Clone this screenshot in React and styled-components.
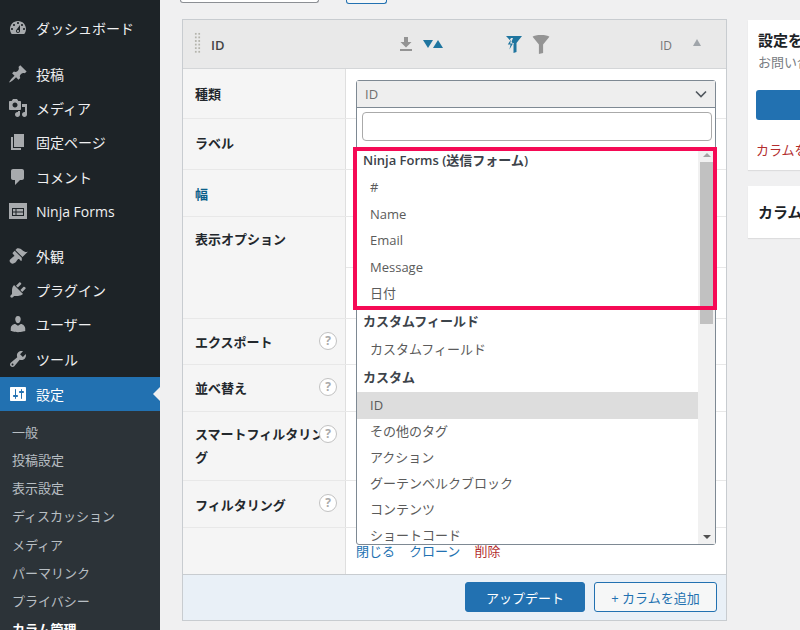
import React from "react";
import styled, { createGlobalStyle } from "styled-components";

const FONT = `"Open Sans", "Noto Sans CJK JP", sans-serif`;

const Global = createGlobalStyle`
  html, body { margin: 0; padding: 0; background: #f0f0f1; }
  * { box-sizing: border-box; }
  body { font-family: ${FONT}; font-size: 13px; color: #3c434a; }
`;

const Shell = styled.div`
  display: flex;
  width: 800px;
  height: 630px;
  overflow: hidden;
  background: #f0f0f1;
`;

/* ---------- admin sidebar ---------- */
const Sidebar = styled.nav`
  flex: 0 0 160px;
  height: 630px;
  overflow: hidden;
  background: #1d2327;
  padding-top: 11px;
`;
const MenuGroup = styled.div`
  margin-bottom: ${(p) => p.$gap}px;
`;
const MenuItem = styled.div`
  position: relative;
  display: flex;
  align-items: center;
  height: ${(p) => (p.$active ? "34px" : "34.4px")};
  padding-left: 8px;
  gap: 8px;
  font-size: 14px;
  color: ${(p) => (p.$active ? "#fff" : "#f0f0f1")};
  background: ${(p) => (p.$active ? "#2271b1" : "transparent")};
  white-space: nowrap;
  svg { flex: 0 0 20px; fill: ${(p) => (p.$active ? "#fff" : "#a7aaad")}; }
`;
const ActiveArrow = styled.span`
  position: absolute;
  right: 0;
  top: 10px;
  border: 7px solid transparent;
  border-right-color: #f0f0f1;
  border-left-width: 0;
`;
const SubMenu = styled.div`
  background: #2c3338;
  padding: 6px 0 6px;
`;
const SubItem = styled.div`
  display: flex;
  align-items: center;
  height: 28.25px;
  padding-left: 12px;
  font-size: 13px;
  white-space: nowrap;
  color: ${(p) => (p.$current ? "#fff" : "rgba(240,246,252,.72)")};
  font-weight: ${(p) => (p.$current ? 700 : 400)};
`;

/* ---------- main ---------- */
const Main = styled.main`
  flex: 1;
  min-width: 0;
  display: flex;
  gap: 21px;
  padding-left: 20px;
`;
const EditorColumn = styled.div`
  flex: 0 0 547px;
`;
const TopStub = styled.div`
  height: 19px;
  display: flex;
  gap: 27px;
  align-items: flex-start;
`;
const StubInput = styled.div`
  width: 139px;
  height: 3px;
  background: #fff;
  border: 1px solid #8c8f94;
  border-top: 0;
  border-radius: 0 0 3px 3px;
`;
const StubButton = styled.div`
  width: 41px;
  height: 4px;
  background: #f6f7f7;
  border: 1px solid #2271b1;
  border-top: 0;
  border-radius: 0 0 3px 3px;
`;
const Card = styled.section`
  margin-left: 2px;
  width: 545px;
  border: 1px solid #c8ccd0;
  background: #fff;
`;
const CardHead = styled.header`
  display: flex;
  align-items: center;
  height: 49px;
  background: #e9e9e9;
  border-bottom: 1px solid #d4d6d8;
  padding-left: 11px;
`;
const DragHandle = styled.span`
  width: 7px;
  height: 22px;
  margin-top: -3px;
  background-image: radial-gradient(circle, #b4b4ac 1.1px, transparent 1.3px);
  background-size: 3.5px 3.6px;
`;
const HeadTitle = styled.strong`
  margin: 2px 0 0 10px;
  width: 188px;
  font-size: 13px;
  font-weight: 600;
  color: #444;
`;
const IconSlot = styled.span`
  display: flex;
  align-items: center;
  width: ${(p) => p.$w}px;
  gap: ${(p) => p.$gap || 0}px;
`;
const HeadType = styled.span`
  width: 33px;
  margin-top: 2px;
  color: #777;
  font-size: 12px;
`;
const Caret = styled.span`
  width: 0;
  height: 0;
  margin-top: -3px;
  border: 4.5px solid transparent;
  border-top: 0;
  border-bottom: 7px solid #a0a5aa;
`;
const CardBody = styled.div`
  position: relative;
`;
const Row = styled.div`
  display: grid;
  grid-template-columns: 163px 1fr;
  height: ${(p) => p.$h}px;
  border-bottom: ${(p) => (p.$last ? "0" : "1px solid #e8e8e8")};
`;
const RowLabel = styled.div`
  position: relative;
  background: #f5f5f5;
  border-right: 1px solid #dfdfdf;
  padding: ${(p) => p.$top}px 10px 0 12px;
  font-size: 13px;
  font-weight: 600;
  line-height: ${(p) => p.$lh || 25}px;
  color: ${(p) => (p.$link ? "#0b5f8a" : "#23282d")};
`;
const RowValue = styled.div`
  padding: 0 10px;
`;
const SubLine = styled.div`
  height: 51px;
  border-bottom: 1px solid #e8e8e8;
  margin: 0 -10px;
`;
const Help = styled.span`
  position: absolute;
  top: 13px;
  right: 8px;
  width: 18px;
  height: 18px;
  border: 1.5px solid #c2c2c2;
  border-radius: 50%;
  background: #fff;
  color: #aaa;
  font-size: 12px;
  font-weight: 700;
  line-height: 15px;
  text-align: center;
`;
const Links = styled.div`
  display: flex;
  gap: 14px;
  padding-top: 14px;
  line-height: 18px;
  color: #2271b1;
`;
const Danger = styled.span`
  color: #b32d2e;
`;
const CardFoot = styled.footer`
  display: flex;
  justify-content: flex-end;
  gap: 9px;
  height: 46px;
  padding: 7px 9px 0 0;
  background: #e9f0f7;
  border-top: 1px solid #c8ccd0;
`;
const Primary = styled.button`
  width: 120px;
  height: 30px;
  border: 1px solid #2271b1;
  border-radius: 3px;
  background: #2271b1;
  color: #fff;
  font: 13px ${FONT};
`;
const Secondary = styled.button`
  width: 123px;
  height: 30px;
  border: 1px solid #2271b1;
  border-radius: 3px;
  background: #f6f7f7;
  color: #2271b1;
  font: 13px ${FONT};
`;

/* ---------- open select (floats over the rows) ---------- */
const Dropdown = styled.div`
  position: absolute;
  left: 173px;
  top: 11px;
  width: 360px;
  height: 465px;
  background: #fff;
  border: 1px solid #7e8993;
  border-radius: 3px;
`;
const SelectHead = styled.div`
  display: flex;
  align-items: center;
  justify-content: space-between;
  height: 27px;
  padding: 0 8px;
  background: #eee;
  border-bottom: 1px solid #7e8993;
  color: #6f6f6f;
  font-size: 13px;
`;
const Search = styled.div`
  height: 29px;
  margin: 4px 3px 7px 5px;
  border: 1px solid #aaa;
  border-radius: 4px;
  background: #fff;
`;
const ListWrap = styled.div`
  display: flex;
  height: 396px;
  overflow: hidden;
`;
const List = styled.ul`
  flex: 1;
  margin: 0;
  padding: 0;
  list-style: none;
  overflow: hidden;
`;
const Group = styled.li`
  height: ${(p) => p.$h}px;
  margin-top: ${(p) => p.$mt || 0}px;
  padding-left: 6px;
  font-weight: 600;
  font-size: 13px;
  line-height: 24px;
  color: #3c434a;
`;
const Option = styled.li`
  height: ${(p) => p.$h || 26}px;
  padding-left: 13px;
  font-size: 13px;
  line-height: ${(p) => p.$h || 25}px;
  color: #5b5b5b;
  background: ${(p) => (p.$selected ? "#ddd" : "transparent")};
`;
const Scrollbar = styled.div`
  flex: 0 0 17px;
  display: flex;
  flex-direction: column;
  background: #f1f1f1;
`;
const ScrollBtn = styled.div`
  height: 14px;
  display: flex;
  align-items: center;
  justify-content: center;
  flex: 0 0 14px;
  margin-top: ${(p) => (p.$push ? "auto" : "0")};
  &::after {
    content: "";
    border: 4px solid transparent;
    ${(p) =>
      p.$down
        ? "border-top: 4px solid #505050; border-bottom: 0;"
        : "border-bottom: 4px solid #a3a3a3; border-top: 0;"}
  }
`;
const ScrollThumb = styled.div`
  height: 162px;
  background: #c1c1c1;
  margin: 0 2px;
`;
const Highlight = styled.div`
  position: absolute;
  left: -4px;
  top: 66px;
  width: 364px;
  height: 163px;
  border: 4px solid #f50a55;
  pointer-events: none;
`;

/* ---------- right column ---------- */
const SideColumn = styled.aside`
  flex: 0 0 auto;
  width: 260px;
  padding-top: 20px;
  display: flex;
  flex-direction: column;
  gap: 16px;
`;
const SideCard = styled.div`
  background: #fff;
  box-shadow: 0 1px 1px rgba(0, 0, 0, 0.08);
  height: ${(p) => p.$h}px;
  padding: ${(p) => p.$pad}px 8px 0 10px;
  white-space: nowrap;
`;
const SideTitle = styled.div`
  font-size: 15px;
  font-weight: 700;
  line-height: 20px;
  color: #1d2327;
`;
const SideNote = styled.div`
  margin-top: 3px;
  font-size: 13px;
  line-height: 18px;
  color: #787c82;
`;
const SideButton = styled.div`
  width: 240px;
  height: 30px;
  margin: 19px 0 0 -2px;
  background: #2271b1;
  border-radius: 3px;
`;
const SideWarn = styled.div`
  margin: 20px 0 0 -2px;
  color: #b32d2e;
  font-size: 13px;
`;

/* ---------- icons ---------- */
const Dash = ({ d }) => (
  <svg width="20" height="20" viewBox="0 0 20 20" aria-hidden="true">
    <path d={d} fillRule="evenodd" />
  </svg>
);
const I = {
  dashboard:
    "M3.76 16h12.48c1.1-1.37 1.76-3.11 1.76-5 0-4.42-3.58-8-8-8s-8 3.58-8 8c0 1.89.66 3.63 1.76 5zM10 4c.55 0 1 .45 1 1s-.45 1-1 1-1-.45-1-1 .45-1 1-1zM6 6c.55 0 1 .45 1 1s-.45 1-1 1-1-.45-1-1 .45-1 1-1zm8 0c.55 0 1 .45 1 1s-.45 1-1 1-1-.45-1-1 .45-1 1-1zm-5.37 5.55L12 7v6c0 1.1-.9 2-2 2s-2-.9-2-2c0-.57.24-1.08.63-1.45zM4 10c.55 0 1 .45 1 1s-.45 1-1 1-1-.45-1-1 .45-1 1-1zm12 0c.55 0 1 .45 1 1s-.45 1-1 1-1-.45-1-1 .45-1 1-1zm-5 3c0-.55-.45-1-1-1s-1 .45-1 1 .45 1 1 1 1-.45 1-1z",
  post:
    "M10.44 3.02l1.82-1.82 6.36 6.35-1.83 1.82c-1.05-.68-2.48-.57-3.41.36l-.75.75c-.92.93-1.04 2.35-.35 3.41l-1.83 1.82-2.41-2.41-2.8 2.79c-.42.42-3.38 2.71-3.8 2.29s1.86-3.39 2.28-3.81l2.79-2.79L4.1 9.36l1.83-1.82c1.05.69 2.48.57 3.4-.36l.75-.75c.93-.92 1.05-2.35.36-3.41z",
  media:
    "M13 11V4c0-.55-.45-1-1-1h-1.67L9 1H5L3.67 3H2c-.55 0-1 .45-1 1v7c0 .55.45 1 1 1h10c.55 0 1-.45 1-1zM7 4.5c1.38 0 2.5 1.12 2.5 2.5S8.38 9.5 7 9.5 4.5 8.38 4.5 7 5.62 4.5 7 4.5zM14 6h5v10.5c0 1.38-1.12 2.5-2.5 2.5S14 17.88 14 16.5s1.12-2.5 2.5-2.5c.17 0 .34.02.5.05V9h-3V6zm-4 8.05V13h2v3.5c0 1.38-1.12 2.5-2.5 2.5S7 17.88 7 16.5 8.12 14 9.5 14c.17 0 .34.02.5.05z",
  page: "M6 15V2h10v13H6zm-1 1h8v2H3V5h2v11z",
  comment:
    "M5 2h9c1.1 0 2 .9 2 2v7c0 1.1-.9 2-2 2h-2l-5 5v-5H5c-1.1 0-2-.9-2-2V4c0-1.1.9-2 2-2z",
  form:
    "M1 2h18v16H1V2zm3 5v8h12V7H4zm1 1h2.5v2.5H5V8zm3.5 0H15v2.5H8.5V8zM5 11.5h2.5V14H5v-2.5zm3.5 0H15V14H8.5v-2.5z",
  appearance:
    "M14.48 11.06L7.41 3.99l1.5-1.5c.5-.56 2.3-.47 3.51.32 1.21.8 1.43 1.28 2.91 2.1 1.18.64 2.45 1.26 4.45.85zm-.71.71L6.7 4.7 4.93 6.47c-.39.39-.39 1.02 0 1.41l1.06 1.06c.39.39.39 1.03 0 1.42-.6.6-1.43 1.11-2.21 1.69-.35.26-.7.53-1.01.84C1.43 13.73.99 15.12 2.6 16.7c1.58 1.61 2.97 1.17 4.81-.14.31-.31.58-.66.84-1.01.58-.78 1.09-1.61 1.69-2.21.39-.39 1.03-.39 1.42 0l1.06 1.06c.39.39 1.02.39 1.41 0z",
  plugin:
    "M13.11 4.36L9.87 7.6 8 5.73l3.24-3.24c.35-.34 1.05-.2 1.56.32.52.51.66 1.21.31 1.55zm-8 1.77l.91-1.12 9.01 9.01-1.19.84c-.71.71-2.63 1.16-3.82 1.16H6.14L4.9 17.26c-.59.59-1.54.59-2.12 0-.59-.58-.59-1.53 0-2.12l1.24-1.24v-3.88c0-1.13.4-3.19 1.09-3.89zm7.26 3.97l3.24-3.24c.34-.35 1.04-.21 1.55.31.52.51.66 1.21.31 1.55l-3.24 3.25z",
  users:
    "M10 9.25c-2.27 0-2.73-3.44-2.73-3.44C7 4.02 7.82 2 9.97 2c2.16 0 2.98 2.02 2.71 3.81 0 0-.41 3.44-2.68 3.44zm0 2.57L12.72 10c2.39 0 4.52 2.33 4.52 4.53v2.49s-3.65 1.13-7.24 1.13c-3.65 0-7.24-1.13-7.24-1.13v-2.49c0-2.25 1.94-4.48 4.47-4.48z",
  tools:
    "M16.68 9.77c-1.34 1.34-3.3 1.67-4.95.99l-5.41 6.52c-.99.99-2.59.99-3.58 0s-.99-2.59 0-3.57l6.52-5.42c-.68-1.65-.35-3.61.99-4.95 1.28-1.28 3.12-1.62 4.72-1.06l-2.89 2.89 2.82 2.82 2.86-2.87c.53 1.58.18 3.39-1.08 4.65zM3.81 16.21c.4.39 1.04.39 1.43 0 .4-.4.4-1.04 0-1.43-.39-.4-1.03-.4-1.43 0-.39.39-.39 1.03 0 1.43z",
  settings:
    "M18 16V4c0-.55-.45-1-1-1H3c-.55 0-1 .45-1 1v12c0 .55.45 1 1 1h14c.55 0 1-.45 1-1zM8 11h1c.55 0 1 .45 1 1s-.45 1-1 1H8v1.5c0 .28-.22.5-.5.5s-.5-.22-.5-.5V13H6c-.55 0-1-.45-1-1s.45-1 1-1h1V5.5c0-.28.22-.5.5-.5s.5.22.5.5V11zm5-2h-1c-.55 0-1-.45-1-1s.45-1 1-1h1V5.5c0-.28.22-.5.5-.5s.5.22.5.5V7h1c.55 0 1 .45 1 1s-.45 1-1 1h-1v5.5c0 .28-.22.5-.5.5s-.5-.22-.5-.5V9z",
};

const DownloadIcon = () => (
  <svg width="14" height="16" viewBox="0 0 14 16" aria-hidden="true">
    <path d="M5 1h4v5h3.5L7 11.5 1.5 6H5z" fill="#949494" />
    <rect x="1" y="13" width="12" height="2" fill="#949494" />
  </svg>
);
const SortIcon = () => (
  <svg width="20" height="10" viewBox="0 0 20 10" aria-hidden="true">
    <path d="M0 1h10L5 9z" fill="#1f759f" />
    <path d="M10 9l5-8 5 8z" fill="#1f759f" />
  </svg>
);
const SmartFilterIcon = () => (
  <svg width="17" height="18" viewBox="0 0 17 18" aria-hidden="true">
    <path d="M1 1h16l-5.5 7v9l-3 1V9z" fill="#1f759f" />
    <path d="M6 3L1.5 10h3L3 17l6-9H6l2-5z" fill="#e9e9e9" />
    <path d="M6 4.5L2.8 9.4h2.8L4.4 14.5 8 8.6H5.2z" fill="#1f759f" />
  </svg>
);
const FunnelIcon = () => (
  <svg width="18" height="20" viewBox="0 0 16 19" aria-hidden="true">
    <path d="M0 2.5C2 .5 14 .5 16 2.5L10 10v8l-4 1v-9z" fill="#949494" />
  </svg>
);
const ChevronIcon = () => (
  <svg width="12" height="8" viewBox="0 0 12 8" aria-hidden="true">
    <path d="M1 1.5l5 5 5-5" fill="none" stroke="#50575e" strokeWidth="1.6" />
  </svg>
);

const mainGroups = [
  { gap: 11, items: [["dashboard", "ダッシュボード"]] },
  {
    gap: 10,
    items: [
      ["post", "投稿"],
      ["media", "メディア"],
      ["page", "固定ページ"],
      ["comment", "コメント"],
      ["form", "Ninja Forms"],
    ],
  },
  {
    gap: 1,
    items: [
      ["appearance", "外観"],
      ["plugin", "プラグイン"],
      ["users", "ユーザー"],
      ["tools", "ツール"],
    ],
  },
];
const subItems = ["一般", "投稿設定", "表示設定", "ディスカッション", "メディア", "パーマリンク", "プライバシー"];

export default function App() {
  return (
    <>
      <Global />
      <Shell>
        <Sidebar>
          {mainGroups.map((group, i) => (
            <MenuGroup key={i} $gap={group.gap}>
              {group.items.map(([icon, label]) => (
                <MenuItem key={label}>
                  <Dash d={I[icon]} />
                  {label}
                </MenuItem>
              ))}
            </MenuGroup>
          ))}
          <MenuItem $active>
            <Dash d={I.settings} />
            設定
            <ActiveArrow />
          </MenuItem>
          <SubMenu>
            {subItems.map((s) => (
              <SubItem key={s}>{s}</SubItem>
            ))}
            <SubItem $current>カラム管理</SubItem>
          </SubMenu>
        </Sidebar>

        <Main>
          <EditorColumn>
            <TopStub>
              <StubInput />
              <StubButton />
            </TopStub>
            <Card>
              <CardHead>
                <DragHandle />
                <HeadTitle>ID</HeadTitle>
                <IconSlot $w={106} $gap={10}>
                  <DownloadIcon />
                  <SortIcon />
                </IconSlot>
                <IconSlot $w={155} $gap={10}>
                  <SmartFilterIcon />
                  <FunnelIcon />
                </IconSlot>
                <HeadType>ID</HeadType>
                <Caret />
              </CardHead>
              <CardBody>
                <Row $h={50}>
                  <RowLabel $top={13}>種類</RowLabel>
                  <RowValue />
                </Row>
                <Row $h={51}>
                  <RowLabel $top={12}>ラベル</RowLabel>
                  <RowValue />
                </Row>
                <Row $h={47}>
                  <RowLabel $top={12} $link>幅</RowLabel>
                  <RowValue />
                </Row>
                <Row $h={102}>
                  <RowLabel $top={10}>表示オプション</RowLabel>
                  <RowValue>
                    <SubLine />
                  </RowValue>
                </Row>
                <Row $h={46}>
                  <RowLabel $top={11}>
                    エクスポート
                    <Help>?</Help>
                  </RowLabel>
                  <RowValue />
                </Row>
                <Row $h={47}>
                  <RowLabel $top={11}>
                    並べ替え
                    <Help>?</Help>
                  </RowLabel>
                  <RowValue />
                </Row>
                <Row $h={69}>
                  <RowLabel $top={11} $lh={23}>
                    スマートフィルタリング
                    <Help>?</Help>
                  </RowLabel>
                  <RowValue />
                </Row>
                <Row $h={47}>
                  <RowLabel $top={12}>
                    フィルタリング
                    <Help>?</Help>
                  </RowLabel>
                  <RowValue />
                </Row>
                <Row $h={46} $last>
                  <RowLabel $top={0} />
                  <RowValue>
                    <Links>
                      <span>閉じる</span>
                      <span>クローン</span>
                      <Danger>削除</Danger>
                    </Links>
                  </RowValue>
                </Row>
                <Dropdown>
                  <SelectHead>
                    ID
                    <ChevronIcon />
                  </SelectHead>
                  <Search />
                  <ListWrap>
                    <List>
                      <Group $h={26}>Ninja Forms (送信フォーム)</Group>
                      <Option $h={26.5}>#</Option>
                      <Option $h={26.5}>Name</Option>
                      <Option $h={26.5}>Email</Option>
                      <Option $h={26.5}>Message</Option>
                      <Option $h={26.5}>日付</Option>
                      <Group $h={27} $mt={2}>カスタムフィールド</Group>
                      <Option $h={26.5}>カスタムフィールド</Option>
                      <Group $h={27} $mt={2.5}>カスタム</Group>
                      <Option $h={27} $selected>ID</Option>
                      <Option>その他のタグ</Option>
                      <Option>アクション</Option>
                      <Option>グーテンベルクブロック</Option>
                      <Option>コンテンツ</Option>
                      <Option>ショートコード</Option>
                    </List>
                    <Scrollbar>
                      <ScrollBtn />
                      <ScrollThumb />
                      <ScrollBtn $down $push />
                    </Scrollbar>
                  </ListWrap>
                  <Highlight />
                </Dropdown>
              </CardBody>
              <CardFoot>
                <Primary>アップデート</Primary>
                <Secondary>+ カラムを追加</Secondary>
              </CardFoot>
            </Card>
          </EditorColumn>

          <SideColumn>
            <SideCard $h={150} $pad={10}>
              <SideTitle>設定を保存</SideTitle>
              <SideNote>お問い合わせ</SideNote>
              <SideButton />
              <SideWarn>カラムをリセット</SideWarn>
            </SideCard>
            <SideCard $h={52} $pad={16}>
              <SideTitle>カラム</SideTitle>
            </SideCard>
          </SideColumn>
        </Main>
      </Shell>
    </>
  );
}
